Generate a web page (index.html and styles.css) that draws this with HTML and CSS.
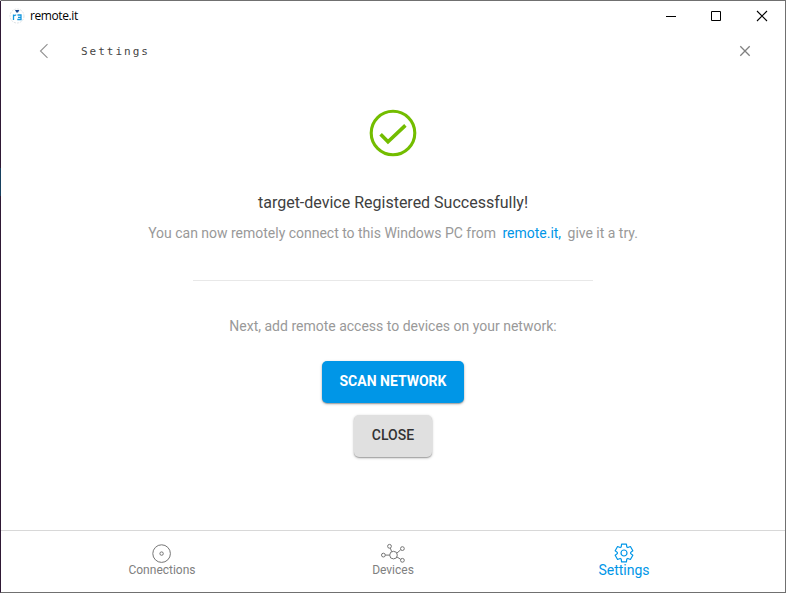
FILE: index.html
```html
<!DOCTYPE html>
<html lang="en">
<head>
<meta charset="utf-8">
<title>remote.it</title>
<link rel="stylesheet" href="styles.css">
</head>
<body>
<div class="window">
  <div class="titlebar">
    <svg class="logo" width="16" height="16" viewBox="0 0 16 16" fill="none">
      <circle cx="8" cy="8" r="7" stroke="#dfe3e6" stroke-dasharray="2 1"/>
      <path d="M6 2h4.4L9 4.6H7.4z" fill="#174a96"/>
      <path d="M4.5 12V6.5M4.5 8.2q.5-1.4 2.7-1.1M8.5 7H12v4.5H8.3M9 9.3h3" stroke="#1598df" stroke-width="1.3"/>
    </svg>
    <span class="app-name">remote.it</span>
    <div class="controls">
      <svg width="46" height="28" viewBox="0 0 46 28" stroke="#000" fill="none"><path d="M19 14.5h10"/></svg>
      <svg width="46" height="28" viewBox="0 0 46 28" stroke="#000" fill="none"><path d="M18.5 9.5h9v9h-9z"/></svg>
      <svg width="46" height="28" viewBox="0 0 46 28" stroke="#000" stroke-width="1.1" fill="none"><path d="M18 9l10 10M28 9L18 19"/></svg>
    </div>
  </div>
  <header class="header">
    <svg width="10" height="16" viewBox="0 0 10 16" fill="none" stroke="#929292" stroke-width="1.1"><path d="M8.5 1.2L1.5 8l7 6.8"/></svg>
    <h1>Settings</h1>
    <svg class="dismiss" width="12" height="12" viewBox="0 0 12 12" fill="none" stroke="#808080" stroke-width="1.3"><path d="M1.3 1.3l9.4 9.4M10.7 1.3l-9.4 9.4"/></svg>
  </header>
  <main>
    <svg class="check" width="48" height="48" viewBox="0 0 48 48" fill="none" stroke="#73bd00" stroke-width="3.1"><circle cx="24" cy="24" r="21.8"/><path d="M11.6 25.2l7.4 7.6L36.4 16.4" stroke-width="3.6"/></svg>
    <h2>target-device Registered Successfully!</h2>
    <p class="message">You can now remotely connect to this Windows PC from <a>remote.it,</a> give it a try.</p>
    <hr>
    <p class="next">Next, add remote access to devices on your network:</p>
    <button class="primary">SCAN NETWORK</button>
    <button class="secondary">CLOSE</button>
  </main>
  <nav>
    <div class="tab">
      <svg width="26" height="20" viewBox="-13 -10 26 20" fill="none" stroke="#757575"><circle cx="-.4" cy=".6" r="8.8"/><circle cx="-.4" cy=".6" r="1.7"/></svg>
      <span>Connections</span>
    </div>
    <div class="tab">
      <svg width="26" height="20" viewBox="-13 -10 26 20" fill="none" stroke="#757575"><circle cx=".5" cy="2.1" r="3.8"/><circle cx="-9.6" cy="2.1" r="1.9"/><circle cx="-3.5" cy="-6.7" r="1.9"/><circle cx="9.4" cy="-4.4" r="1.9"/><circle cx="9.4" cy="7.3" r="1.9"/><path d="M-7.7 2.1h4.4M-2.7-4.9l1.4 3.6M3.9.1l3.8-3.3M4 4l3.7 2.3"/></svg>
      <span>Devices</span>
    </div>
    <div class="tab active">
      <svg width="26" height="20" viewBox="-13 -10 26 20" fill="none" stroke="#0096e7" stroke-width="1.2" stroke-linejoin="round"><path d="M-2.4-8.8H2.4L2.8-6.1 3.88-5.47 6.42-6.48 8.82-2.32 6.68-.63V.63L8.82 2.32 6.42 6.48 3.88 5.47 2.8 6.1 2.4 8.8H-2.4L-2.8 6.1-3.88 5.47-6.42 6.48-8.82 2.32-6.68.63V-.63L-8.82-2.32-6.42-6.48-3.88-5.47-2.8-6.1Z"/><circle r="3"/></svg>
      <span>Settings</span>
    </div>
  </nav>
</div>
</body>
</html>
```
FILE: styles.css
```css
* { box-sizing: border-box; }
body { margin: 0; font-family: Roboto, sans-serif; }
.window {
  height: 593px;
  display: flex;
  flex-direction: column;
  background: linear-gradient(#2f1935 168px, #17405f 168px 196px, #2f1935 196px) left / 1px 100% no-repeat border-box, #fff;
  border: 1px solid #707070;
  border-left-color: transparent;
}
.titlebar { height: 29px; display: flex; align-items: center; padding-left: 8px; }
.app-name { font: 12px "Open Sans", sans-serif; letter-spacing: -0.4px; margin-left: 5px; color: #000; }
.controls { display: flex; margin-left: auto; }
.header { height: 42px; display: flex; align-items: center; padding: 0 34px 0 38px; }
.header h1 {
  margin: 0 0 0 32px;
  font: 11px "DejaVu Sans Mono", monospace;
  letter-spacing: 2px;
  color: #444;
}
.dismiss { margin-left: auto; }
main { flex: 1; display: flex; flex-direction: column; align-items: center; padding-top: 37px; }
.check { flex: none; }
h2 { margin: 35px 0 0; font-size: 16px; font-weight: 400; line-height: 22px; color: #404040; }
p { margin: 0; font-size: 14px; line-height: 20px; color: #999; white-space: nowrap; }
.message { margin-top: 9px; letter-spacing: -0.012px; }
.message a { color: #0096e7; margin: 0 3px; }
hr { width: 400px; height: 1px; border: 0; margin: 37px 0 35px; background: #e8e8e8; }
button {
  border: 0;
  border-radius: 5px;
  height: 42px;
  padding: 0 0 2px;
  font: 500 14px Roboto, sans-serif;
  box-shadow: 0 1px 3px rgba(0, 0, 0, .28), 0 1px 1px rgba(0, 0, 0, .2);
}
.primary { width: 142px; margin-top: 25px; background: #0096e7; color: #fff; font-weight: 700; }
.secondary { width: 78px; margin-top: 12px; background: #e0e0e0; color: #333; }
nav { height: 62px; border-top: 1px solid #d8d8d8; display: flex; justify-content: center; gap: 151px; padding-top: 12px; }
.tab { width: 80px; display: flex; flex-direction: column; align-items: center; color: #808080; font-size: 12px; line-height: 14px; }
.active { color: #0096e7; font-size: 14px; }
```
